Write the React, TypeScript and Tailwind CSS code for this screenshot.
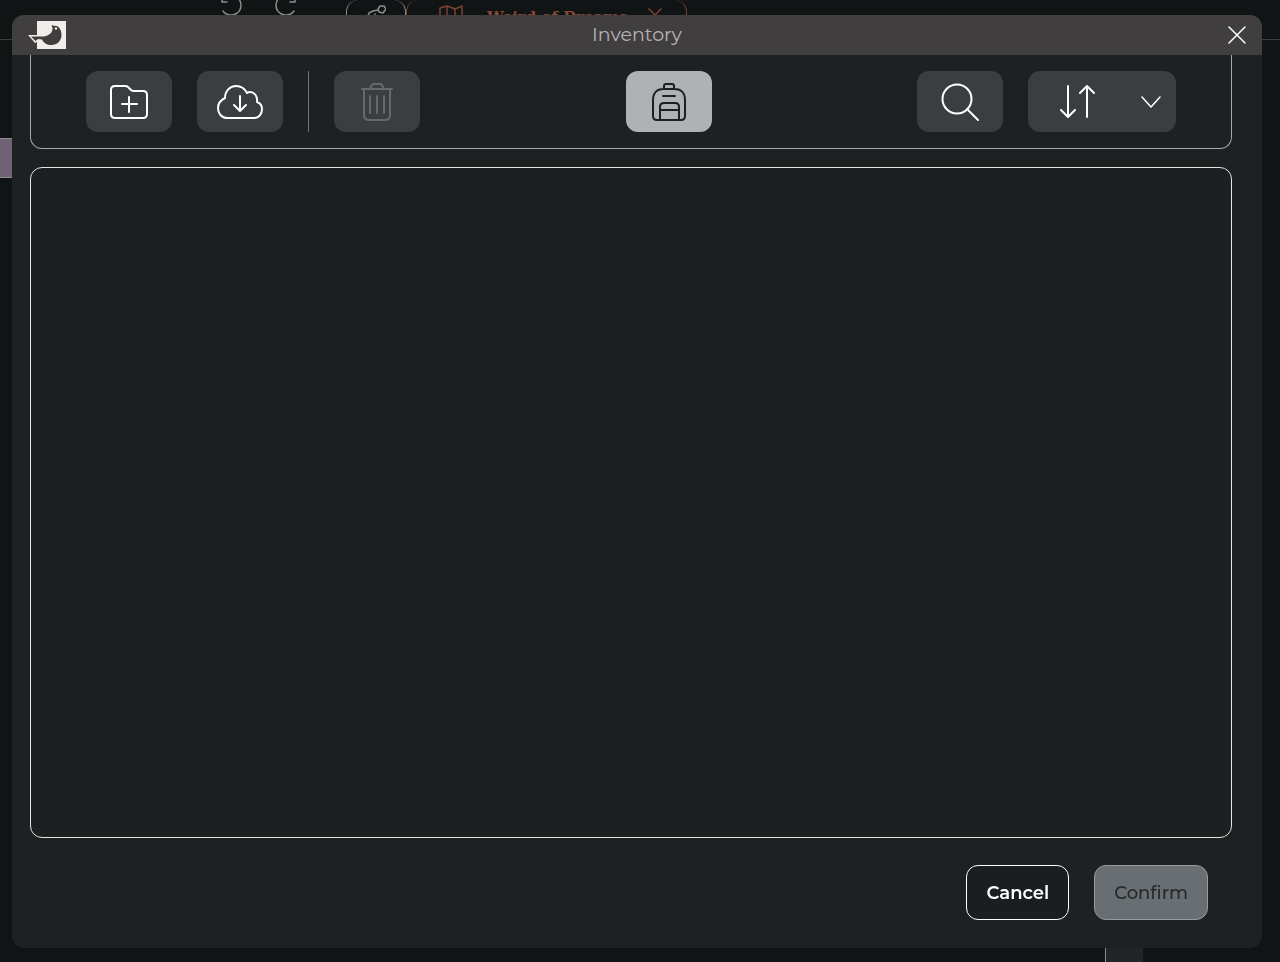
import { useState, type ReactNode } from "react";

const TOOL = "flex items-center justify-center rounded-xl h-[61px] w-[86px] bg-[#3a3e40] text-white";

function Drawing({ w, h, stroke = 2, className, children }: { w: number; h: number; stroke?: number; className?: string; children: ReactNode }) {
  return (
    <svg
      width={w}
      height={h}
      viewBox={`0 0 ${w} ${h}`}
      fill="none"
      stroke="currentColor"
      strokeWidth={stroke}
      strokeLinecap="round"
      strokeLinejoin="round"
      aria-hidden="true"
      className={className}
    >
      {children}
    </svg>
  );
}

function Logo() {
  return (
    <svg width="38" height="28" viewBox="0 0 38 28" aria-hidden="true">
      <path d="M9 0h29v28H9v-7l-2 1L0 14h9z" fill="#f0edeb" />
      <path
        d="M3 15.500h13c5-1 9-4 8.500-8.500L23.500 4l3 1c4-1 7 4 7 9 0 6-4.500 10-10 10-4.500 0-8-2-9.500-5.500l-4-.5-2.500 2z"
        fill="#413e3f"
      />
      <circle cx="28" cy="7.500" r="1.200" fill="#f0edeb" />
    </svg>
  );
}

/* workspace that stays dimmed under the dialog */
function Workspace() {
  return (
    <div className="flex min-h-screen flex-col bg-[#111414]" aria-hidden="true">
      <div className="flex h-10 items-start overflow-hidden border-b border-[#3c3f40] pl-[220px] text-[#8b8d8d]">
        <Drawing w={24} h={16} stroke={1.500}>
          <path d="M2 0v2h5M3 11A10 10 0 0 0 21 5q0-3-2-6" />
        </Drawing>
        <Drawing w={24} h={16} stroke={1.500} className="ml-[29px]">
          <path d="M22 0v2h-5M21 11A10 10 0 0 1 3 5q0-3 2-6" />
        </Drawing>
        <div className="ml-[49px] flex h-10 w-[60px] justify-center rounded-t-xl border-x border-[#8b8d8d] pt-1">
          <Drawing w={20} h={16} stroke={1.500}>
            <path d="M14 2h4l2 3-3 4-4-1-1-3zM12 6l-5 1-4 2-1 3 2 3 4-2 1-3" />
          </Drawing>
        </div>
        <div className="flex h-10 w-[281px] items-start rounded-t-xl border-x border-[#7a4330] pt-1 pl-8 text-[#7a4330]">
          <Drawing w={24} h={24} stroke={1.500}>
            <path d="M1 4l7-2 8 3 7-3v17l-7 3-8-3-7 2zM8 2v17M16 5v17" />
          </Drawing>
          <span className="ml-6 pt-px font-['DejaVu_Serif',serif] text-[15px] leading-6 font-bold whitespace-nowrap text-[#8a4a35]">Weird of Dreams</span>
          <Drawing w={14} h={14} stroke={1.500} className="mt-1 ml-5">
            <path d="M1 1l12 12M13 1L1 13" />
          </Drawing>
        </div>
      </div>
      <div className="mt-[98px] h-10 w-16 border-y border-[#8b8d8d] bg-[#6f6275]" />
      <div className="flex grow justify-end pr-[137px]">
        <div className="w-[38px] border-l border-[#8b8d8d] bg-[#212527]" />
      </div>
    </div>
  );
}

function Toolbar() {
  const [bag, setBag] = useState(true);

  return (
    <div className="flex items-center justify-between rounded-b-xl border border-t-0 border-[#a5a8a8] px-[55px] pt-4 pb-4">
      <div className="flex items-center gap-[25px]">
        <button type="button" aria-label="New folder" className={TOOL}>
          <Drawing w={38} h={34}>
            <path d="M5 1h10q2 0 3 1l3 3q1 1 3 1h9q4 0 4 4v19q0 4-4 4H5q-4 0-4-4V5q0-4 4-4zM19 12v15M12 19h15" />
          </Drawing>
        </button>
        <button type="button" aria-label="Download" className={TOOL}>
          <Drawing w={46} h={34}>
            <path d="M10 33h27c5 0 8-4 8-9 0-3-2-6-5-7 1-6-3-10-7-10-1 0-2 0-3 1-2-4-6-7-11-7C13 1 8 6 8 13c-4 2-7 5-7 10 0 6 4 10 9 10zM23 11v15M17 20l6 6 6-6" />
          </Drawing>
        </button>
        <div className="h-[61px] w-px bg-[#6f7273]" />
        <button type="button" aria-label="Delete" disabled className="flex h-[61px] w-[86px] items-center justify-center rounded-xl bg-[#3a3e40] text-[#66696b]">
          <Drawing w={32} h={38}>
            <path d="M1 6h30M9 6l2-4q1-1 2-1h6q1 0 2 1l2 4M3 6v26q0 5 5 5h16q5 0 5-5V6M9 13v17M16 13v17M23 13v17" />
          </Drawing>
        </button>
      </div>
      <button
        type="button"
        aria-label="Backpack"
        aria-pressed={bag}
        onClick={() => setBag((b) => !b)}
        className="flex h-[61px] w-[86px] items-center justify-center rounded-xl bg-[#aeb2b2] text-[#1c2021]"
      >
        <Drawing w={34} h={38}>
          <path d="M12 6V3q0-2 2-2h6q2 0 2 2v3M5 37q-4 0-4-4V17C1 10 5 6 11 6h12c6 0 10 4 10 11v16q0 4-4 4zM11 13h12M8 37V24q0-4 4-4h11q4 0 4 4v13M8 27h19" />
        </Drawing>
      </button>
      <div className="flex items-center gap-[25px]">
        <button type="button" aria-label="Search" className={TOOL}>
          <Drawing w={38} h={38}>
            <circle cx="16" cy="16" r="14.500" />
            <path d="M26 26l11 11" />
          </Drawing>
        </button>
        <div className="flex h-[61px] w-[148px] rounded-xl bg-[#3a3e40] text-white">
          <button type="button" aria-label="Sort order" className="flex w-[98px] items-center justify-center">
            <Drawing w={35} h={34}>
              <path d="M8 1v31M1 25l7 7 7-7M27 32V1M20 8l7-7 7 7" />
            </Drawing>
          </button>
          <button type="button" aria-label="Sort options" className="flex w-[50px] items-center justify-center">
            <Drawing w={20} h={12} stroke={1.500}>
              <path d="M1 1l9 10 9-10" />
            </Drawing>
          </button>
        </div>
      </div>
    </div>
  );
}

export default function App() {
  const button = "h-[55px] rounded-xl border px-[19px] text-lg leading-6";

  return (
    <div className="relative overflow-hidden font-['Montserrat','Inter',sans-serif]">
      <Workspace />
      <div className="fixed inset-0 flex pt-[15px] pr-[18px] pb-[14px] pl-3">
        <div role="dialog" aria-labelledby="dialog-title" className="flex grow flex-col overflow-hidden rounded-xl bg-[#1d2122]">
          <header className="grid h-10 shrink-0 grid-cols-[1fr_auto_1fr] items-center bg-[#413e3f] px-4">
            <Logo />
            <h1 id="dialog-title" className="text-[19px] leading-6 text-[#b5b4b4]">Inventory</h1>
            <button type="button" aria-label="Close" className="justify-self-end text-white">
              <Drawing w={18} h={18} stroke={1.500}>
                <path d="M1 1l16 16M17 1L1 17" />
              </Drawing>
            </button>
          </header>
          <div className="flex grow flex-col pr-[30px] pl-[18px]">
            <Toolbar />
            <div className="mt-[18px] grow rounded-xl border border-[#e4e5e5] bg-[#1c2021]" />
          </div>
          <footer className="flex justify-end gap-[25px] pt-[27px] pr-[54px] pb-7">
            <button type="button" className={`${button} border-white bg-[#1b1e20] font-semibold text-white`}>Cancel</button>
            <button type="button" disabled className={`${button} border-[#989b9d] bg-[#696e72] font-medium text-[#25292b]`}>Confirm</button>
          </footer>
        </div>
      </div>
    </div>
  );
}
